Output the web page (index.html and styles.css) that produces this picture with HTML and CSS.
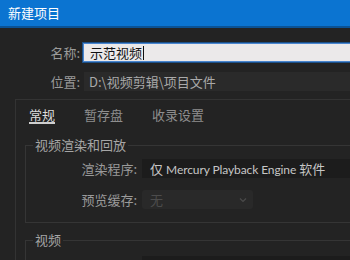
FILE: index.html
```html
<!DOCTYPE html>
<html lang="zh-CN">
<head>
<meta charset="utf-8">
<title>新建项目</title>
<link rel="stylesheet" href="styles.css">
</head>
<body>
<div class="titlebar">新建项目</div>
<div class="form">
  <div class="row">
    <label class="label">名称:</label>
    <div class="input">示范视频<span class="caret"></span></div>
  </div>
  <div class="row">
    <label class="label">位置:</label>
    <div class="path">D:\视频剪辑\项目文件</div>
  </div>
</div>
<div class="panel">
  <div class="tabs">
    <span class="tab active">常规</span>
    <span class="tab">暂存盘</span>
    <span class="tab">收录设置</span>
  </div>
  <fieldset class="group">
    <legend class="legend">视频渲染和回放</legend>
    <div class="grow first">
      <span class="glabel">渲染程序:</span>
      <div class="select wide"><span class="value"><span class="cjk">仅</span> <span class="latin">Mercury Playback Engine</span> <span class="cjk">软件</span></span></div>
    </div>
    <div class="grow">
      <span class="glabel">预览缓存:</span>
      <div class="select disabled"><span>无</span>
        <svg class="chev" width="8" height="6" viewBox="0 0 8 6"><path d="M1 1.5 L4 4.5 L7 1.5" fill="none" stroke="#4a4a4a" stroke-width="1.2"/></svg>
      </div>
    </div>
  </fieldset>
  <fieldset class="group second">
    <legend class="legend">视频</legend>
    <div class="grow near">
      <span class="glabel">显示格式:</span>
      <div class="select wide"><span class="cjk">时间码</span></div>
    </div>
  </fieldset>
</div>
</body>
</html>
```
FILE: styles.css
```css
html, body {
  margin: 0;
  padding: 0;
}
body {
  width: 350px;
  height: 260px;
  overflow: hidden;
  background: #232323;
  font-family: "Noto Sans", "Noto Sans CJK SC", sans-serif;
  font-size: 13px;
  color: #9c9c9c;
}
.titlebar {
  height: 26px;
  line-height: 26px;
  background: #0b74d1;
  border-bottom: 2px solid #0a5295;
  color: #ffffff;
  padding-left: 8px;
  font-family: "Noto Sans CJK SC", sans-serif;
  font-size: 13px;
}
.form {
  padding-top: 15px;
  display: flex;
  flex-direction: column;
  gap: 10px;
}
.row {
  display: flex;
  align-items: center;
  height: 19px;
}
.label {
  width: 80px;
  text-align: right;
  font-family: "Noto Sans CJK SC", sans-serif;
  color: #9a9a9a;
  flex: none;
}
.input {
  margin-left: 3px;
  width: 320px;
  flex: none;
  height: 19px;
  box-sizing: border-box;
  background: #ebe9ea;
  border: 1px solid #4a86cf;
  box-shadow: 0 0 0 1px #1c4f86;
  color: #111;
  padding-left: 6px;
  line-height: 17px;
  font-family: "Noto Sans CJK SC", sans-serif;
  display: flex;
  align-items: center;
}
.caret {
  display: inline-block;
  width: 1px;
  height: 14px;
  background: #111;
  margin-left: 1px;
}
.path {
  margin-left: 4px;
  width: 320px;
  flex: none;
  height: 19px;
  line-height: 19px;
  background: #2a2a2a;
  color: #a9a9a9;
  padding-left: 5px;
  font-family: "Noto Sans CJK SC", sans-serif;
}
.panel {
  margin: 8px 0 0 15px;
  width: 400px;
  border-top: 1px solid #333;
  border-left: 1px solid #333;
  height: 300px;
}
.tabs {
  display: flex;
  gap: 29px;
  padding: 8px 0 0 13px;
  font-family: "Noto Sans CJK SC", sans-serif;
}
.tab {
  line-height: 14px;
  border-bottom: 2px solid transparent;
  color: #8e8e8e;
}
.tab.active {
  color: #dcdcdc;
  border-bottom-color: #cfcfcf;
}
.group {
  margin: 13px 0 0 9px;
  padding: 0 0 13px 0;
  border: 1px solid #353535;
  border-right: none;
  min-width: 0;
}
.group.second {
  margin-top: 9px;
}
.legend {
  margin-left: 7px;
  padding: 0 2px;
  line-height: 16px;
  color: #a6a6a6;
  font-family: "Noto Sans CJK SC", sans-serif;
}
.grow {
  display: flex;
  align-items: center;
  margin-top: 12px;
  height: 19px;
}
.grow.first {
  margin-top: 6px;
}
.grow.near {
  margin-top: 8px;
}
.glabel {
  width: 111px;
  text-align: right;
  flex: none;
  color: #9a9a9a;
  font-family: "Noto Sans CJK SC", sans-serif;
}
.select {
  margin-left: 5px;
  height: 19px;
  box-sizing: border-box;
  display: flex;
  align-items: center;
  padding-left: 8px;
  flex: none;
  white-space: nowrap;
}
.select.wide {
  width: 260px;
  background: #1c1c1c;
  color: #c6c6c6;
  font-size: 12px;
  font-family: Lato, "Noto Sans CJK SC", sans-serif;
}
.latin {
  letter-spacing: -0.1px;
}
.cjk {
  font-family: "Noto Sans CJK SC", sans-serif;
  font-size: 13px;
}
.select.disabled {
  width: 111px;
  background: #292929;
  border-radius: 3px;
  color: #4c4c4c;
  justify-content: space-between;
  padding-right: 6px;
  font-family: "Noto Sans CJK SC", sans-serif;
}
.chev {
  display: block;
}
```
